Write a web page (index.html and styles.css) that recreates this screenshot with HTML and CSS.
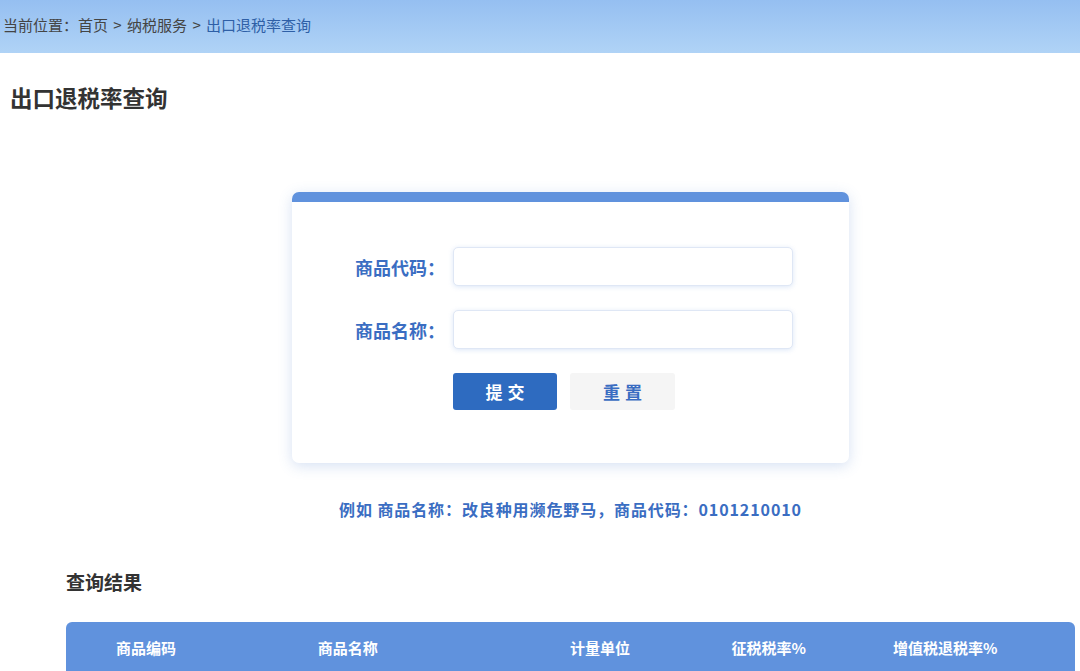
FILE: index.html
```html
<!DOCTYPE html>
<html lang="zh-CN">
<head>
<meta charset="utf-8">
<title>出口退税率查询</title>
<link rel="stylesheet" href="styles.css">
</head>
<body>
<div class="topbar">
  <div class="crumb">当前位置：首页 &gt; 纳税服务 &gt; <span class="cur">出口退税率查询</span></div>
</div>
<h1 class="page-title">出口退税率查询</h1>
<div class="content">
  <div class="card">
    <div class="card-body">
      <div class="row">
        <label class="lbl">商品代码：</label>
        <input class="ipt" type="text">
      </div>
      <div class="row">
        <label class="lbl">商品名称：</label>
        <input class="ipt" type="text">
      </div>
      <div class="btns">
        <button class="btn btn-primary">提交</button>
        <button class="btn btn-reset">重置</button>
      </div>
    </div>
  </div>
  <p class="example">例如 商品名称：改良种用濒危野马，商品代码：0101210010</p>
  <h2 class="result-title">查询结果</h2>
  <table class="result">
    <colgroup>
      <col class="c1"><col class="c2"><col class="c3"><col class="c4"><col class="c5">
    </colgroup>
    <thead>
      <tr>
        <th>商品编码</th>
        <th>商品名称</th>
        <th>计量单位</th>
        <th>征税税率%</th>
        <th>增值税退税率%</th>
      </tr>
    </thead>
  </table>
</div>
</body>
</html>
```

FILE: styles.css
```css
* { box-sizing: border-box; }
html, body { margin: 0; padding: 0; background: #fff; }
body {
  font-family: "Noto Sans CJK SC", "Liberation Sans", sans-serif;
  color: #333;
  overflow: hidden;
}
.topbar {
  height: 53px;
  background: linear-gradient(180deg, #95bff1 0%, #b0d3f6 100%);
  display: flex;
  align-items: center;
  padding: 0 0 5px 3px;
}
.crumb {
  font-size: 15px;
  color: #444;
  line-height: 1;
  word-spacing: 2px;
}
.crumb .cur { color: #2e5fa6; }
.page-title {
  margin: 31px 0 0 10px;
  font-size: 22.5px;
  line-height: 26px;
  font-weight: 700;
  color: #333;
}
.content {
  margin: 0 5px 0 66px;
  display: flex;
  flex-direction: column;
  align-items: center;
}
.card {
  margin-top: 82px;
  width: 557px;
  background: #fff;
  border-radius: 7px;
  border-top: 10px solid #6092dd;
  box-shadow: 0 3px 14px rgba(70, 120, 200, 0.22);
}
.card-body {
  padding: 45px 56px 53px 0;
  display: flex;
  flex-direction: column;
  gap: 24px;
}
.row {
  display: flex;
  align-items: center;
}
.lbl {
  width: 153px;
  margin-right: 8px;
  text-align: right;
  font-size: 18px;
  font-weight: 700;
  color: #3a6dc2;
  white-space: nowrap;
}
.ipt {
  width: 340px;
  height: 39px;
  border: 1px solid #dfe7f5;
  border-radius: 5px;
  background: #fff;
  box-shadow: 0 1px 5px rgba(90, 140, 220, 0.22);
  outline: none;
}
.btns {
  display: flex;
  gap: 13px;
  padding-left: 161px;
}
.btn {
  width: 104px;
  height: 37px;
  border: none;
  border-radius: 3px;
  font-family: inherit;
  font-size: 17px;
  font-weight: 700;
  letter-spacing: 5px;
  padding: 0 0 0 5px;
  cursor: pointer;
}
.btn-primary { background: #2e6bc0; color: #fff; }
.btn-reset { background: #f5f5f5; color: #3a6dc2; width: 105px; }
.example {
  margin: 36px 0 0;
  font-size: 16px;
  letter-spacing: 0.9px;
  font-weight: 700;
  color: #3a6dc2;
  line-height: 20px;
}
.result-title {
  align-self: flex-start;
  margin: 51px 0 0;
  font-size: 19px;
  line-height: 23px;
  font-weight: 700;
  color: #333;
}
.result {
  margin-top: 29px;
  width: 100%;
  border-collapse: separate;
  border-spacing: 0;
  table-layout: fixed;
}
.c1 { width: 20%; }
.c2 { width: 25%; }
.c3 { width: 16%; }
.c4 { width: 16%; }
.c5 { width: 23%; }
.result th {
  background: #6092dd;
  color: #fff;
  font-size: 15px;
  font-weight: 700;
  text-align: left;
  padding: 0 0 0 50px;
  height: 50px;
  white-space: nowrap;
}
.result th:first-child { border-top-left-radius: 6px; }
.result th:last-child { border-top-right-radius: 6px; }
```
